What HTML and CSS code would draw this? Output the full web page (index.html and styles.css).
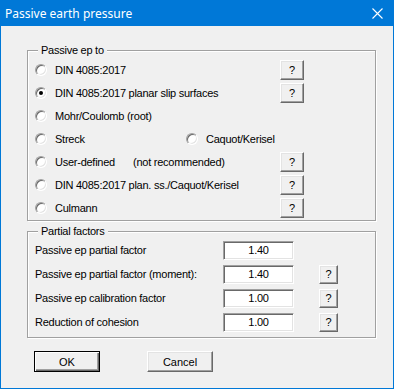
FILE: index.html
```html
<!DOCTYPE html>
<html lang="en">
<head>
  <meta charset="UTF-8">
  <title>Passive earth pressure</title>
  <link rel="stylesheet" href="styles.css">
</head>
<body>
  <div class="window">
    <div class="titlebar">
      <span class="title">Passive earth pressure</span>
      <svg class="close" width="11" height="11" viewBox="0 0 11 11">
        <path d="M0.5 0.5L10.5 10.5M10.5 0.5L0.5 10.5" stroke="#fff" stroke-width="1.1" fill="none"/>
      </svg>
    </div>

    <div class="content">
      <div class="group group-ep">
        <span class="group-title">Passive ep to</span>
        <div class="opt-row">
          <label class="opt"><span class="radio"></span>DIN 4085:2017</label>
          <button class="help">?</button>
        </div>
        <div class="opt-row">
          <label class="opt"><span class="radio checked"></span>DIN 4085:2017 planar slip surfaces</label>
          <button class="help">?</button>
        </div>
        <div class="opt-row">
          <label class="opt"><span class="radio"></span>Mohr/Coulomb (root)</label>
        </div>
        <div class="opt-row">
          <label class="opt opt-half"><span class="radio"></span>Streck</label>
          <label class="opt"><span class="radio"></span>Caquot/Kerisel</label>
        </div>
        <div class="opt-row">
          <label class="opt"><span class="radio"></span><span class="opt-name">User-defined</span>(not recommended)</label>
          <button class="help">?</button>
        </div>
        <div class="opt-row">
          <label class="opt"><span class="radio"></span>DIN 4085:2017 plan. ss./Caquot/Kerisel</label>
          <button class="help">?</button>
        </div>
        <div class="opt-row">
          <label class="opt"><span class="radio"></span>Culmann</label>
          <button class="help">?</button>
        </div>
      </div>

      <div class="group group-factors">
        <span class="group-title">Partial factors</span>
        <div class="factor-row">
          <span class="factor-label">Passive ep partial factor</span>
          <span class="field">1.40</span>
        </div>
        <div class="factor-row">
          <span class="factor-label">Passive ep partial factor (moment):</span>
          <span class="field">1.40</span>
          <button class="help help-small">?</button>
        </div>
        <div class="factor-row">
          <span class="factor-label">Passive ep calibration factor</span>
          <span class="field">1.00</span>
          <button class="help help-small">?</button>
        </div>
        <div class="factor-row">
          <span class="factor-label">Reduction of cohesion</span>
          <span class="field">1.00</span>
          <button class="help help-small">?</button>
        </div>
      </div>

      <div class="actions">
        <button class="btn btn-default">OK</button>
        <button class="btn">Cancel</button>
      </div>
    </div>
  </div>
</body>
</html>
```

FILE: styles.css
```css
* {
  box-sizing: border-box;
}
body {
  margin: 0;
  font-family: "Liberation Sans", Arial, sans-serif;
  font-size: 11px;
  letter-spacing: -0.25px;
  color: #000;
}
.window {
  width: 394px;
  height: 389px;
  background: #f0f0f0;
  border: 1px solid #0078d7;
  border-top: 0;
}
.titlebar {
  height: 26px;
  background: #0078d7;
  color: #fff;
  display: flex;
  align-items: center;
  justify-content: space-between;
  padding: 0 10px 0 4px;
}
.title {
  font-family: "Noto Sans", "Open Sans", sans-serif;
  font-size: 12px;
  letter-spacing: 0;
}
.content {
  padding: 24px 17px 0 26px;
}
.group {
  position: relative;
  border: 1px solid #a0a0a0;
  box-shadow: 1px 1px 0 #fff, inset 1px 1px 0 #fff;
}
.group-title {
  position: absolute;
  top: -7px;
  left: 10px;
  padding: 0 3px;
  line-height: 13px;
  background: #f0f0f0;
}
.group-ep {
  padding: 7px 71px 1px 7px;
}
.opt-row {
  height: 23px;
  display: flex;
  align-items: center;
}
.opt {
  flex: 1;
  display: flex;
  align-items: center;
  white-space: nowrap;
}
.opt-half {
  flex: 0 0 151px;
}
.opt-name {
  width: 78px;
}
.radio {
  width: 12px;
  height: 12px;
  margin-right: 8px;
  border-radius: 50%;
  border: 1px solid;
  border-color: #a0a0a0 #fff #fff #a0a0a0;
  background: #fff;
  box-shadow: inset 1px 1px 0 #696969, inset -1px -1px 0 #e3e3e3;
  display: flex;
  align-items: center;
  justify-content: center;
}
.radio.checked::after {
  content: '';
  width: 4px;
  height: 4px;
  border-radius: 50%;
  background: #000;
}
button {
  font-family: inherit;
  font-size: 11px;
  color: #000;
  background: #f0f0f0;
  border: 1px solid;
  border-color: #fff #696969 #696969 #fff;
  box-shadow: inset -1px -1px 0 #a0a0a0, inset 1px 1px 0 #e3e3e3;
  padding: 0;
}
.help {
  width: 24px;
  height: 20px;
}
.group-factors {
  margin-top: 10px;
  padding: 6px 0 3px 7px;
}
.factor-row {
  height: 24px;
  display: flex;
  align-items: center;
}
.factor-label {
  width: 188px;
  white-space: nowrap;
}
.field {
  width: 71px;
  height: 19px;
  background: #fff;
  border: 1px solid;
  border-color: #a0a0a0 #fff #fff #a0a0a0;
  box-shadow: inset 1px 1px 0 #696969, inset -1px -1px 0 #e3e3e3;
  display: flex;
  align-items: center;
  justify-content: center;
}
.help-small {
  width: 19px;
  height: 19px;
  margin-left: 25px;
}
.actions {
  margin-top: 13px;
  padding-left: 7px;
  display: flex;
  gap: 47px;
}
.btn {
  width: 66px;
  height: 21px;
}
.btn-default {
  border-color: #000;
  box-shadow: inset 1px 1px 0 #fff, inset -1px -1px 0 #696969, inset -2px -2px 0 #a0a0a0;
}
```
